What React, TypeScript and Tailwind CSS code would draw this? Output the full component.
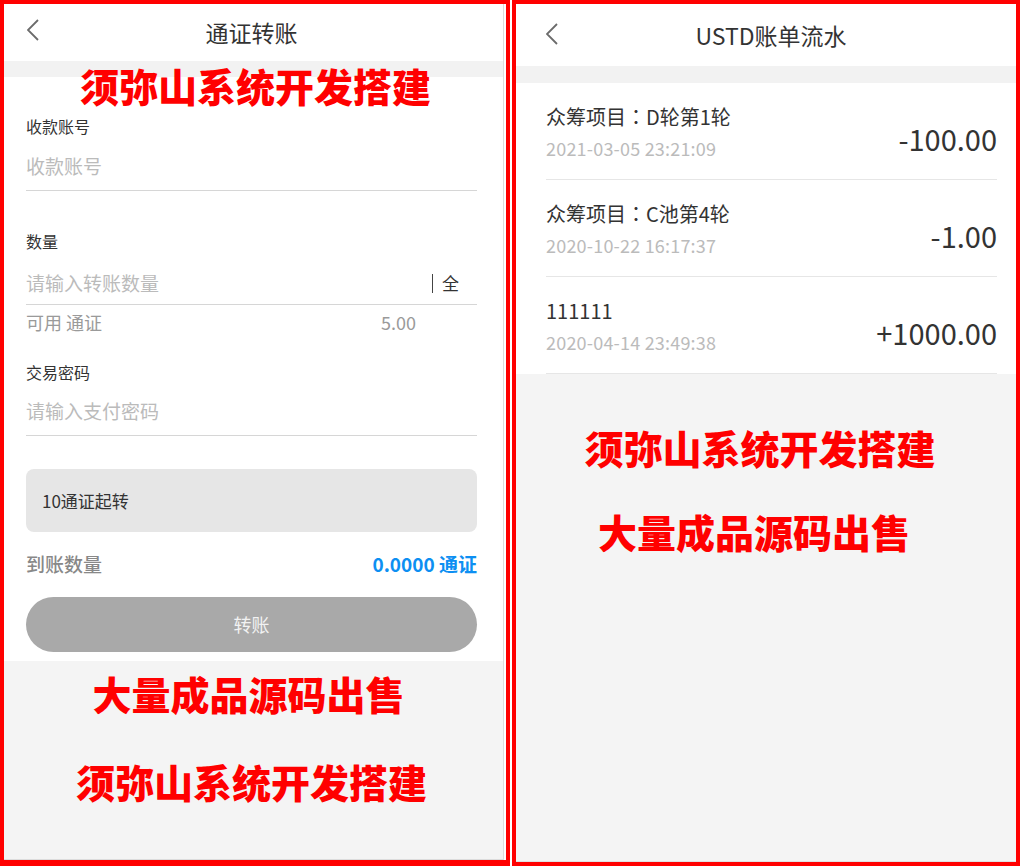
import React from "react";

const FONT = '"Noto Sans CJK SC", "Noto Sans", sans-serif';

function Chevron() {
  return (
    <svg width="12" height="22" viewBox="0 0 12 22" fill="none">
      <polyline points="11,1 1,11 11,21" stroke="#6b6b6b" strokeWidth="1.8" fill="none" />
    </svg>
  );
}

function Mark({ children, className = "" }: { children: React.ReactNode; className?: string }) {
  return (
    <div
      className={"text-[39px] leading-[40px] font-black text-[#ff0000] text-center " + className}
      style={{ fontFamily: FONT }}
    >
      {children}
    </div>
  );
}

function LeftPanel() {
  return (
    <div className="w-[510px] h-full border-4 border-b-[6px] border-[#ff0000] bg-white">
      <div className="relative w-[500px] h-full flex flex-col border-r border-b border-[#dcdcdc]">
        {/* header */}
        <div className="h-[57px] flex items-center relative">
          <div className="absolute left-[23px] top-[15px]">
            <Chevron />
          </div>
          <div className="w-full text-center text-[23px] text-[#333] pr-[4px]">通证转账</div>
        </div>
        <div className="h-[16px] bg-[#f2f2f2]" />
        {/* form */}
        <div className="pl-[22px] pr-[26px] flex flex-col">
          <div className="h-[33px]" />
          <div className="h-[32px] flex items-center text-[16px] text-[#333]">收款账号</div>
          <div className="h-[49px] flex items-center text-[19px] text-[#bbb] border-b border-[#d6d6d6]">收款账号</div>
          <div className="h-[34px]" />
          <div className="h-[32px] flex items-center text-[16px] text-[#333]">数量</div>
          <div className="h-[48px] pt-[5px] flex items-center justify-between text-[19px] text-[#bbb] border-b border-[#d6d6d6]">
            <span>请输入转账数量</span>
            <span className="flex items-center mr-[18px]">
              <span className="w-px h-[19px] bg-[#444] mr-[9px]" />
              <span className="text-[17px] text-[#333]">全</span>
            </span>
          </div>
          <div className="h-[34px] flex items-center justify-between text-[18px] text-[#9a9a9a]">
            <span>可用 通证</span>
            <span className="mr-[61px]">5.00</span>
          </div>
          <div className="h-[17px]" />
          <div className="h-[32px] flex items-center text-[16px] text-[#333]">交易密码</div>
          <div className="h-[48px] flex items-center text-[19px] text-[#bbb] border-b border-[#d6d6d6]">请输入支付密码</div>
          <div className="h-[33px]" />
          <div className="h-[63px] rounded-[8px] bg-[#e6e6e6] flex items-center px-[16px] text-[17px] text-[#333]">
            10通证起转
          </div>
          <div className="h-[65px] flex items-center justify-between">
            <span className="text-[19px] text-[#888] font-medium">到账数量</span>
            <span className="text-[19px] text-[#0d8ff2] font-bold">0.0000 通证</span>
          </div>
          <div className="h-[55px] rounded-full bg-[#a9a9a9] flex items-center justify-center text-[18px] text-[#f2f2f2]">
            转账
          </div>
          <div className="h-[9px]" />
        </div>
        <div className="flex-1 bg-[#f4f4f4] flex flex-col pt-[12px]">
          <Mark className="pr-[10px]">大量成品源码出售</Mark>
          <Mark className="mt-[48px] pr-[4px]">须弥山系统开发搭建</Mark>
        </div>
        <div className="absolute left-0 right-0 top-[61px] pl-[4px]">
          <Mark>须弥山系统开发搭建</Mark>
        </div>
      </div>
    </div>
  );
}

const items = [
  { pre: "众筹项目", post: "D轮第1轮", date: "2021-03-05 23:21:09", amount: "-100.00" },
  { pre: "众筹项目", post: "C池第4轮", date: "2020-10-22 16:17:37", amount: "-1.00" },
  { pre: "", post: "111111", date: "2020-04-14 23:49:38", amount: "+1000.00" },
];

function RightPanel() {
  return (
    <div className="w-[508px] h-full border-4 border-[#ff0000] bg-white">
      <div className="w-full h-full flex flex-col">
        <div className="h-[62px] flex items-center relative">
          <div className="absolute left-[30px] top-[19px]">
            <Chevron />
          </div>
          <div className="w-full text-center text-[23px] text-[#333] pl-[10px]">USTD账单流水</div>
        </div>
        <div className="h-[17px] bg-[#f2f2f2]" />
        <div className="flex flex-col">
          {items.map((it, i) => (
            <div key={i} className="ml-[30px] mr-[19px] h-[97px] border-b border-[#e6e6e6] flex justify-between">
              <div className="flex flex-col pt-[22px]">
                <div className="h-[24px] leading-[24px] text-[20px] text-[#333] whitespace-nowrap">
                  {it.pre}
                  {it.pre && (
                    <span style={{ fontFamily: '"Noto Sans CJK TC", sans-serif' }}>：</span>
                  )}
                  {it.post}
                </div>
                <div className="h-[20px] leading-[20px] mt-[9px] text-[18px] tracking-[0.2px] text-[#bbb]">{it.date}</div>
              </div>
              <div className="mt-[38px] h-[34px] leading-[34px] text-[29px] text-[#333]">{it.amount}</div>
            </div>
          ))}
        </div>
        <div className="flex-1 bg-[#f4f4f4] flex flex-col pt-[53px] border-b border-[#e0e0e0]">
          <Mark className="pr-[12px]">须弥山系统开发搭建</Mark>
          <Mark className="mt-[44px] pr-[24px]">大量成品源码出售</Mark>
        </div>
      </div>
    </div>
  );
}

export default function App() {
  return (
    <div className="w-[1020px] h-[866px] flex gap-[2px] bg-white" style={{ fontFamily: FONT }}>
      <LeftPanel />
      <RightPanel />
    </div>
  );
}
